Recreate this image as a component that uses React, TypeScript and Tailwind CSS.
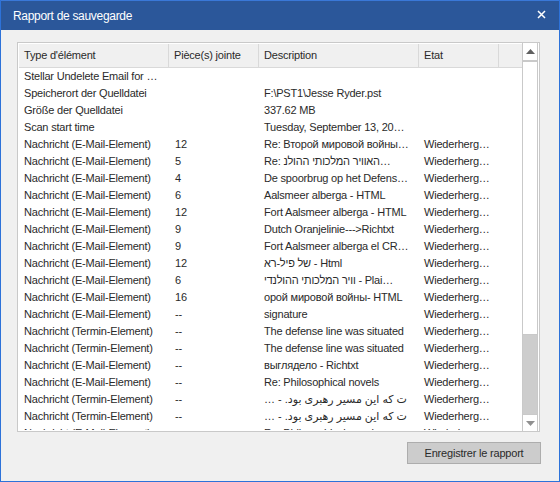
import React from "react";

type Row = [string, string, React.ReactNode, string];

const EM = "Nachricht (E-Mail-Element)";
const TE = "Nachricht (Termin-Element)";
const W = "Wiederherg…";

const persian = (
    <>
        … - .<bdi>ت که این مسیر رهبری بود</bdi>
    </>
);

const rows: Row[] = [
    ["Stellar Undelete Email for …", "", "", ""],
    ["Speicherort der Quelldatei", "", "F:\\PST1\\Jesse Ryder.pst", ""],
    ["Größe der Quelldatei", "", "337.62 MB", ""],
    ["Scan start time", "", "Tuesday, September 13, 20…", ""],
    [EM, "12", "Re: Второй мировой войны…", W],
    [EM, "5", "Re: האוויר המלכותי ההולנ…", W],
    [EM, "4", "De spoorbrug op het Defens…", W],
    [EM, "6", "Aalsmeer alberga - HTML", W],
    [EM, "12", "Fort Aalsmeer alberga -  HTML", W],
    [EM, "9", "Dutch Oranjelinie--->Richtxt", W],
    [EM, "9", "Fort Aalsmeer alberga el CR…", W],
    [EM, "12", " של פיל-רא - Html", W],
    [EM, "6", "וויר המלכותי ההולנדי - Plai…", W],
    [EM, "16", "орой мировой войны- HTML", W],
    [EM, "--", "signature", W],
    [TE, "--", "The defense line was situated", W],
    [TE, "--", "The defense line was situated", W],
    [EM, "--", "выглядело  - Richtxt", W],
    [EM, "--", "Re: Philosophical novels", W],
    [TE, "--", persian, W],
    [TE, "--", persian, W],
    [EM, "--", "Re: Philosophical novels", W],
];

const HeaderCell = ({ label, w }: { label: string; w: string }) => (
    <div className={`${w} h-full shrink-0 border-r border-[#d9d9d9] pl-[5px] flex items-center whitespace-nowrap`}>
        {label}
    </div>
);

export default function App() {
    return (
        <div
            className="w-[560px] h-[482px] flex flex-col bg-[#f0f0f0] border-x border-b border-[#2d72d9] text-[11px] tracking-[-0.2px] text-[#2a2a2a] overflow-hidden"
            style={{ fontFamily: '"Liberation Sans", "DejaVu Sans", sans-serif' }}
        >
            {/* title bar */}
            <div className="h-[30px] shrink-0 bg-[#2b579a] border-t border-[#3a78d8] flex items-center justify-between pl-[12px] pr-[13px] text-white">
                <span className="text-[12px] tracking-[-0.3px]">Rapport de sauvegarde</span>
                <svg width="9" height="9" viewBox="0 0 9 9" className="mt-[-2px]">
                    <path d="M1 1 L8 8 M8 1 L1 8" stroke="white" strokeWidth="1.5" />
                </svg>
            </div>

            {/* list */}
            <div className="mt-[12px] ml-[16px] w-[523px] h-[390px] border border-[#c9c9c9] bg-white flex p-px">
                <div className="flex-1 flex flex-col overflow-hidden">
                    <div className="h-[24px] shrink-0 flex bg-[#f0f0f0] border-b border-[#d9d9d9]">
                        <HeaderCell label="Type d'élément" w="w-[150px]" />
                        <HeaderCell label="Pièce(s) jointe" w="w-[90px]" />
                        <HeaderCell label="Description" w="w-[160px]" />
                        <HeaderCell label="Etat" w="w-[80px]" />
                        <div className="flex-1" />
                    </div>
                    <div className="flex-1 overflow-hidden">
                        {rows.map((r, i) => (
                            <div key={i} className="h-[17px] flex items-center whitespace-nowrap">
                                <div className="w-[150px] shrink-0 pl-[5px] overflow-hidden">{r[0]}</div>
                                <div className="w-[90px] shrink-0 pl-[6px] overflow-hidden">{r[1]}</div>
                                <div className="w-[160px] shrink-0 pl-[5px] overflow-hidden">{r[2]}</div>
                                <div className="w-[80px] shrink-0 pl-[5px] overflow-hidden">{r[3]}</div>
                            </div>
                        ))}
                    </div>
                </div>

                {/* scrollbar */}
                <div className="w-[16px] shrink-0 flex flex-col border-x border-[#c9c9c9] -my-px">
                    <div className="h-[19px] shrink-0 flex items-center justify-center border-b-2 border-[#c9c9c9]">
                        <svg width="9" height="5" viewBox="0 0 9 5">
                            <path d="M0 5 L4.5 0 L9 5 Z" fill="#606060" />
                        </svg>
                    </div>
                    <div className="flex-1 border-b border-[#c9c9c9]" />
                    <div className="h-[79px] shrink-0 bg-[#cdcdcd]" />
                    <div className="h-[17px] shrink-0 flex items-center justify-center border-t border-[#c9c9c9]">
                        <svg width="9" height="5" viewBox="0 0 9 5">
                            <path d="M0 0 L9 0 L4.5 5 Z" fill="#909090" />
                        </svg>
                    </div>
                </div>
            </div>

            {/* footer */}
            <div className="mt-[10px] flex justify-end pr-[18px]">
                <button className="w-[134px] h-[22px] bg-[#cccccc] border border-[#adadad] text-[11px] tracking-[-0.2px] text-[#2a2a2a]">
                    Enregistrer le rapport
                </button>
            </div>
        </div>
    );
}
